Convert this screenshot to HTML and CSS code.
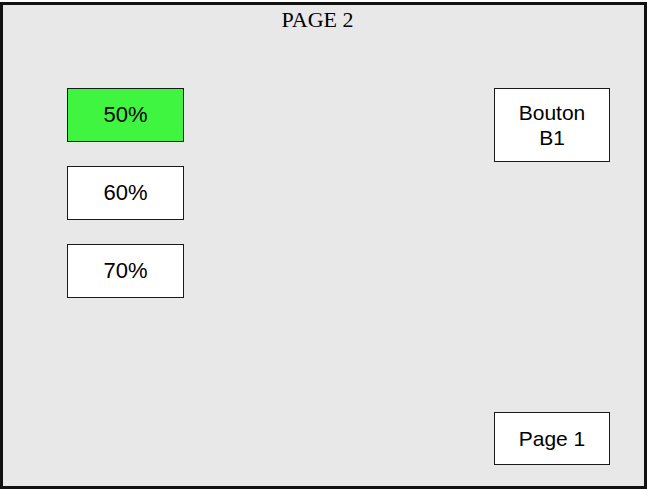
FILE: index.html
```html
<!DOCTYPE html>
<html lang="fr">
<head>
<meta charset="utf-8">
<title>Page 2</title>
<link rel="stylesheet" href="styles.css">
</head>
<body>
<div class="frame">
  <div class="title">PAGE 2</div>
  <div class="content">
    <div class="col-left">
      <div class="btn pct active">50%</div>
      <div class="btn pct">60%</div>
      <div class="btn pct">70%</div>
    </div>
    <div class="col-right">
      <div class="btn wide tall">Bouton<br>B1</div>
      <div class="btn wide nav">Page 1</div>
    </div>
  </div>
</div>
</body>
</html>
```

FILE: styles.css
```css
html, body {
  margin: 0;
  padding: 0;
  background: #ffffff;
}
body {
  padding-top: 2px;
}
.frame {
  box-sizing: border-box;
  width: 647px;
  height: 487px;
  border: 3px solid #111;
  background: #e8e8e8;
  display: flex;
  flex-direction: column;
}
.title {
  font-family: "Liberation Serif", "Times New Roman", serif;
  font-size: 22px;
  line-height: 22px;
  height: 22px;
  padding-top: 4px;
  padding-right: 12px;
  text-align: center;
  color: #000;
}
.content {
  flex: 1;
  display: flex;
  justify-content: space-between;
  padding: 57px 34px 21px 64px;
}
.col-left {
  display: flex;
  flex-direction: column;
  gap: 24px;
}
.col-right {
  display: flex;
  flex-direction: column;
  justify-content: space-between;
}
.btn {
  box-sizing: border-box;
  border: 1px solid #1a1a1a;
  background: #fff;
  color: #000;
  font-family: "Liberation Sans", Arial, sans-serif;
  display: flex;
  align-items: center;
  justify-content: center;
  text-align: center;
}
.pct {
  width: 117px;
  height: 54px;
  font-size: 22px;
}
.active {
  background: #40f540;
}
.wide {
  width: 116px;
  font-size: 21px;
  line-height: 25px;
}
.tall {
  height: 74px;
}
.nav {
  height: 53px;
}
```
